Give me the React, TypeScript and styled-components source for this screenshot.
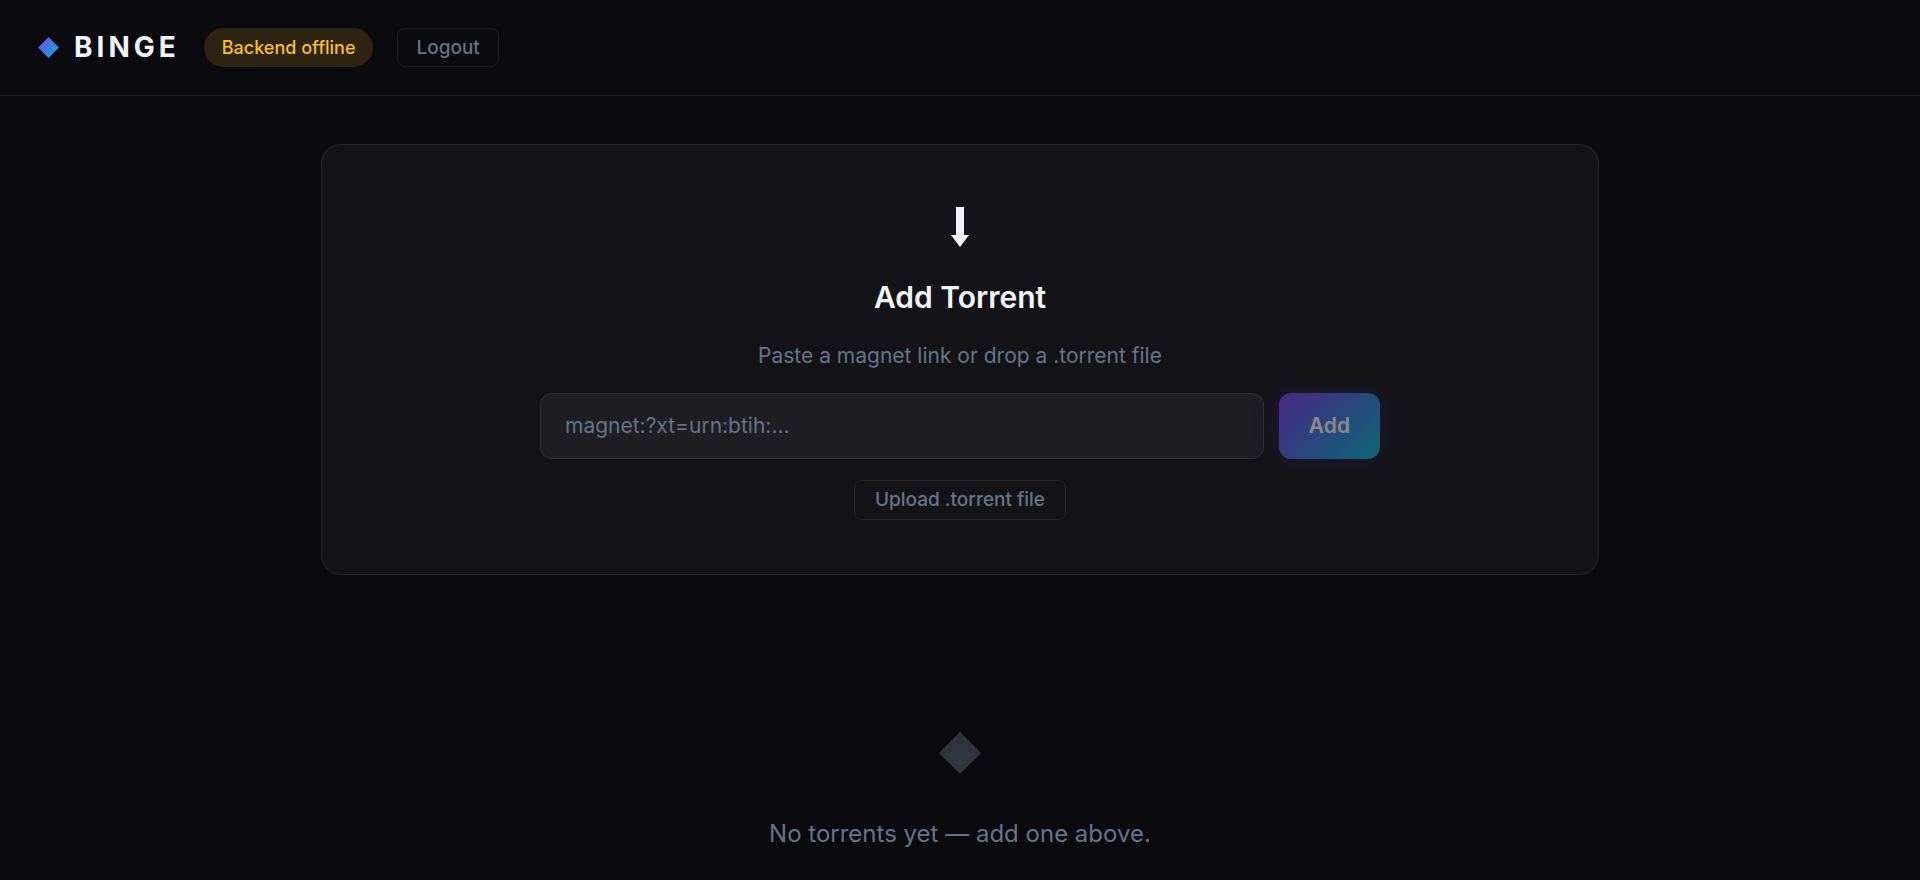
import React, { useState } from "react";
import styled, { createGlobalStyle } from "styled-components";

const GlobalStyle = createGlobalStyle`
  *, *::before, *::after { box-sizing: border-box; }
  body {
    margin: 0;
    background: #0a0a0f;
    color: #f1f5f9;
    font-family: Inter, "Liberation Sans", sans-serif;
    font-size: 20px;
    line-height: 30px;
    -webkit-font-smoothing: antialiased;
  }
  button, input { font-family: inherit; }
`;

const Header = styled.header`
  display: flex;
  align-items: center;
  gap: 24px;
  padding: 28px 38px;
  border-bottom: 1px solid rgba(255, 255, 255, 0.08);
`;

const Brand = styled.h1`
  display: flex;
  align-items: center;
  gap: 15px;
  margin: 0;
  font-size: 28px;
  line-height: 39px;
  font-weight: 700;
  letter-spacing: 4px;
`;

const StatusPill = styled.span`
  padding: 6px 18px;
  border-radius: 20px;
  background: rgba(251, 191, 36, 0.15);
  color: #fbbf24;
  font-size: 18px;
  line-height: 27px;
  font-weight: 500;
`;

const GhostButton = styled.button<{ $roomy?: boolean }>`
  padding: 7px ${({ $roomy }) => ($roomy ? 20 : 18)}px;
  border: 1px solid rgba(255, 255, 255, 0.08);
  border-radius: 8px;
  background: transparent;
  color: #64748b;
  font-size: 19px;
  line-height: ${({ $roomy }) => ($roomy ? 24 : 23)}px;
  font-weight: 500;
  cursor: pointer;
`;

const Main = styled.main`
  width: 100%;
  max-width: 1358px;
  margin: 0 auto;
  padding: 48px 40px 0;
`;

const Card = styled.section`
  display: flex;
  flex-direction: column;
  align-items: center;
  padding: 60px 40px 54px;
  border: 1px solid rgba(255, 255, 255, 0.08);
  border-radius: 20px;
  background: #141418;
`;

const CardTitle = styled.h2`
  margin: 28px 0 22px;
  font-size: 30px;
  line-height: 40px;
  font-weight: 600;
`;

const Hint = styled.p`
  margin: 0 0 20px;
  color: #64748b;
  font-size: 21px;
  line-height: 34px;
`;

const MagnetForm = styled.form`
  display: flex;
  gap: 15px;
  width: 100%;
  max-width: 840px;
  margin-bottom: 21px;
`;

const MagnetInput = styled.input`
  flex: 1;
  min-width: 0;
  padding: 19px 24px;
  border: 1px solid rgba(255, 255, 255, 0.08);
  border-radius: 12px;
  outline: none;
  background: #1e1e23;
  color: #f1f5f9;
  font-size: 21px;
  line-height: 26px;
  &::placeholder { color: #64748b; opacity: 1; }
`;

const AddButton = styled.button`
  padding: 20px 30px;
  border: 0;
  border-radius: 12px;
  background: linear-gradient(135deg, #7c3aed, #06b6d4);
  box-shadow: 0 0 24px rgba(124, 58, 237, 0.25);
  color: #ffffff;
  font-size: 21px;
  line-height: 26px;
  font-weight: 600;
  cursor: pointer;
  &:disabled { opacity: 0.5; cursor: not-allowed; }
`;

const EmptyState = styled.section`
  display: flex;
  flex-direction: column;
  align-items: center;
  gap: 42px;
  padding: 157px 40px 30px;
  color: #64748b;
`;

const EmptyText = styled.p`
  margin: 0;
  font-size: 24px;
  line-height: 36px;
`;

function BrandMark() {
  return (
    <svg width="21" height="21" viewBox="0 0 21 21" aria-hidden="true">
      <defs>
        <linearGradient id="brand" x1="-0.1" y1="-0.1" x2="1.1" y2="1.1">
          <stop offset="0" stopColor="#7c3aed" />
          <stop offset="1" stopColor="#06b6d4" />
        </linearGradient>
      </defs>
      <path d="M10.5 0 21 10.5 10.5 21 0 10.5Z" fill="url(#brand)" />
    </svg>
  );
}

function DownArrow() {
  return (
    <svg width="18" height="44" viewBox="0 0 18 44" aria-hidden="true">
      <path d="M5 2h8v28h5L9 42 0 30h5Z" fill="currentColor" />
    </svg>
  );
}

function EmptyMark() {
  return (
    <svg width="42" height="42" viewBox="0 0 42 42" aria-hidden="true">
      <path d="M21 0 42 21 21 42 0 21Z" fill="#2e3440" />
    </svg>
  );
}

export default function App() {
  const [magnet, setMagnet] = useState("");
  return (
    <>
      <GlobalStyle />
      <Header>
        <Brand>
          <BrandMark />
          BINGE
        </Brand>
        <StatusPill role="status">Backend offline</StatusPill>
        <GhostButton type="button">Logout</GhostButton>
      </Header>
      <Main>
        <Card>
          <DownArrow />
          <CardTitle>Add Torrent</CardTitle>
          <Hint id="magnet-hint">Paste a magnet link or drop a .torrent file</Hint>
          <MagnetForm onSubmit={(event) => event.preventDefault()}>
            <MagnetInput
              type="text"
              aria-label="Magnet link"
              aria-describedby="magnet-hint"
              placeholder="magnet:?xt=urn:btih:..."
              value={magnet}
              onChange={(event) => setMagnet(event.target.value)}
            />
            <AddButton type="submit" disabled={!magnet.trim()}>Add</AddButton>
          </MagnetForm>
          <GhostButton type="button" $roomy>Upload .torrent file</GhostButton>
        </Card>
        <EmptyState>
          <EmptyMark />
          <EmptyText>No torrents yet — add one above.</EmptyText>
        </EmptyState>
      </Main>
    </>
  );
}
